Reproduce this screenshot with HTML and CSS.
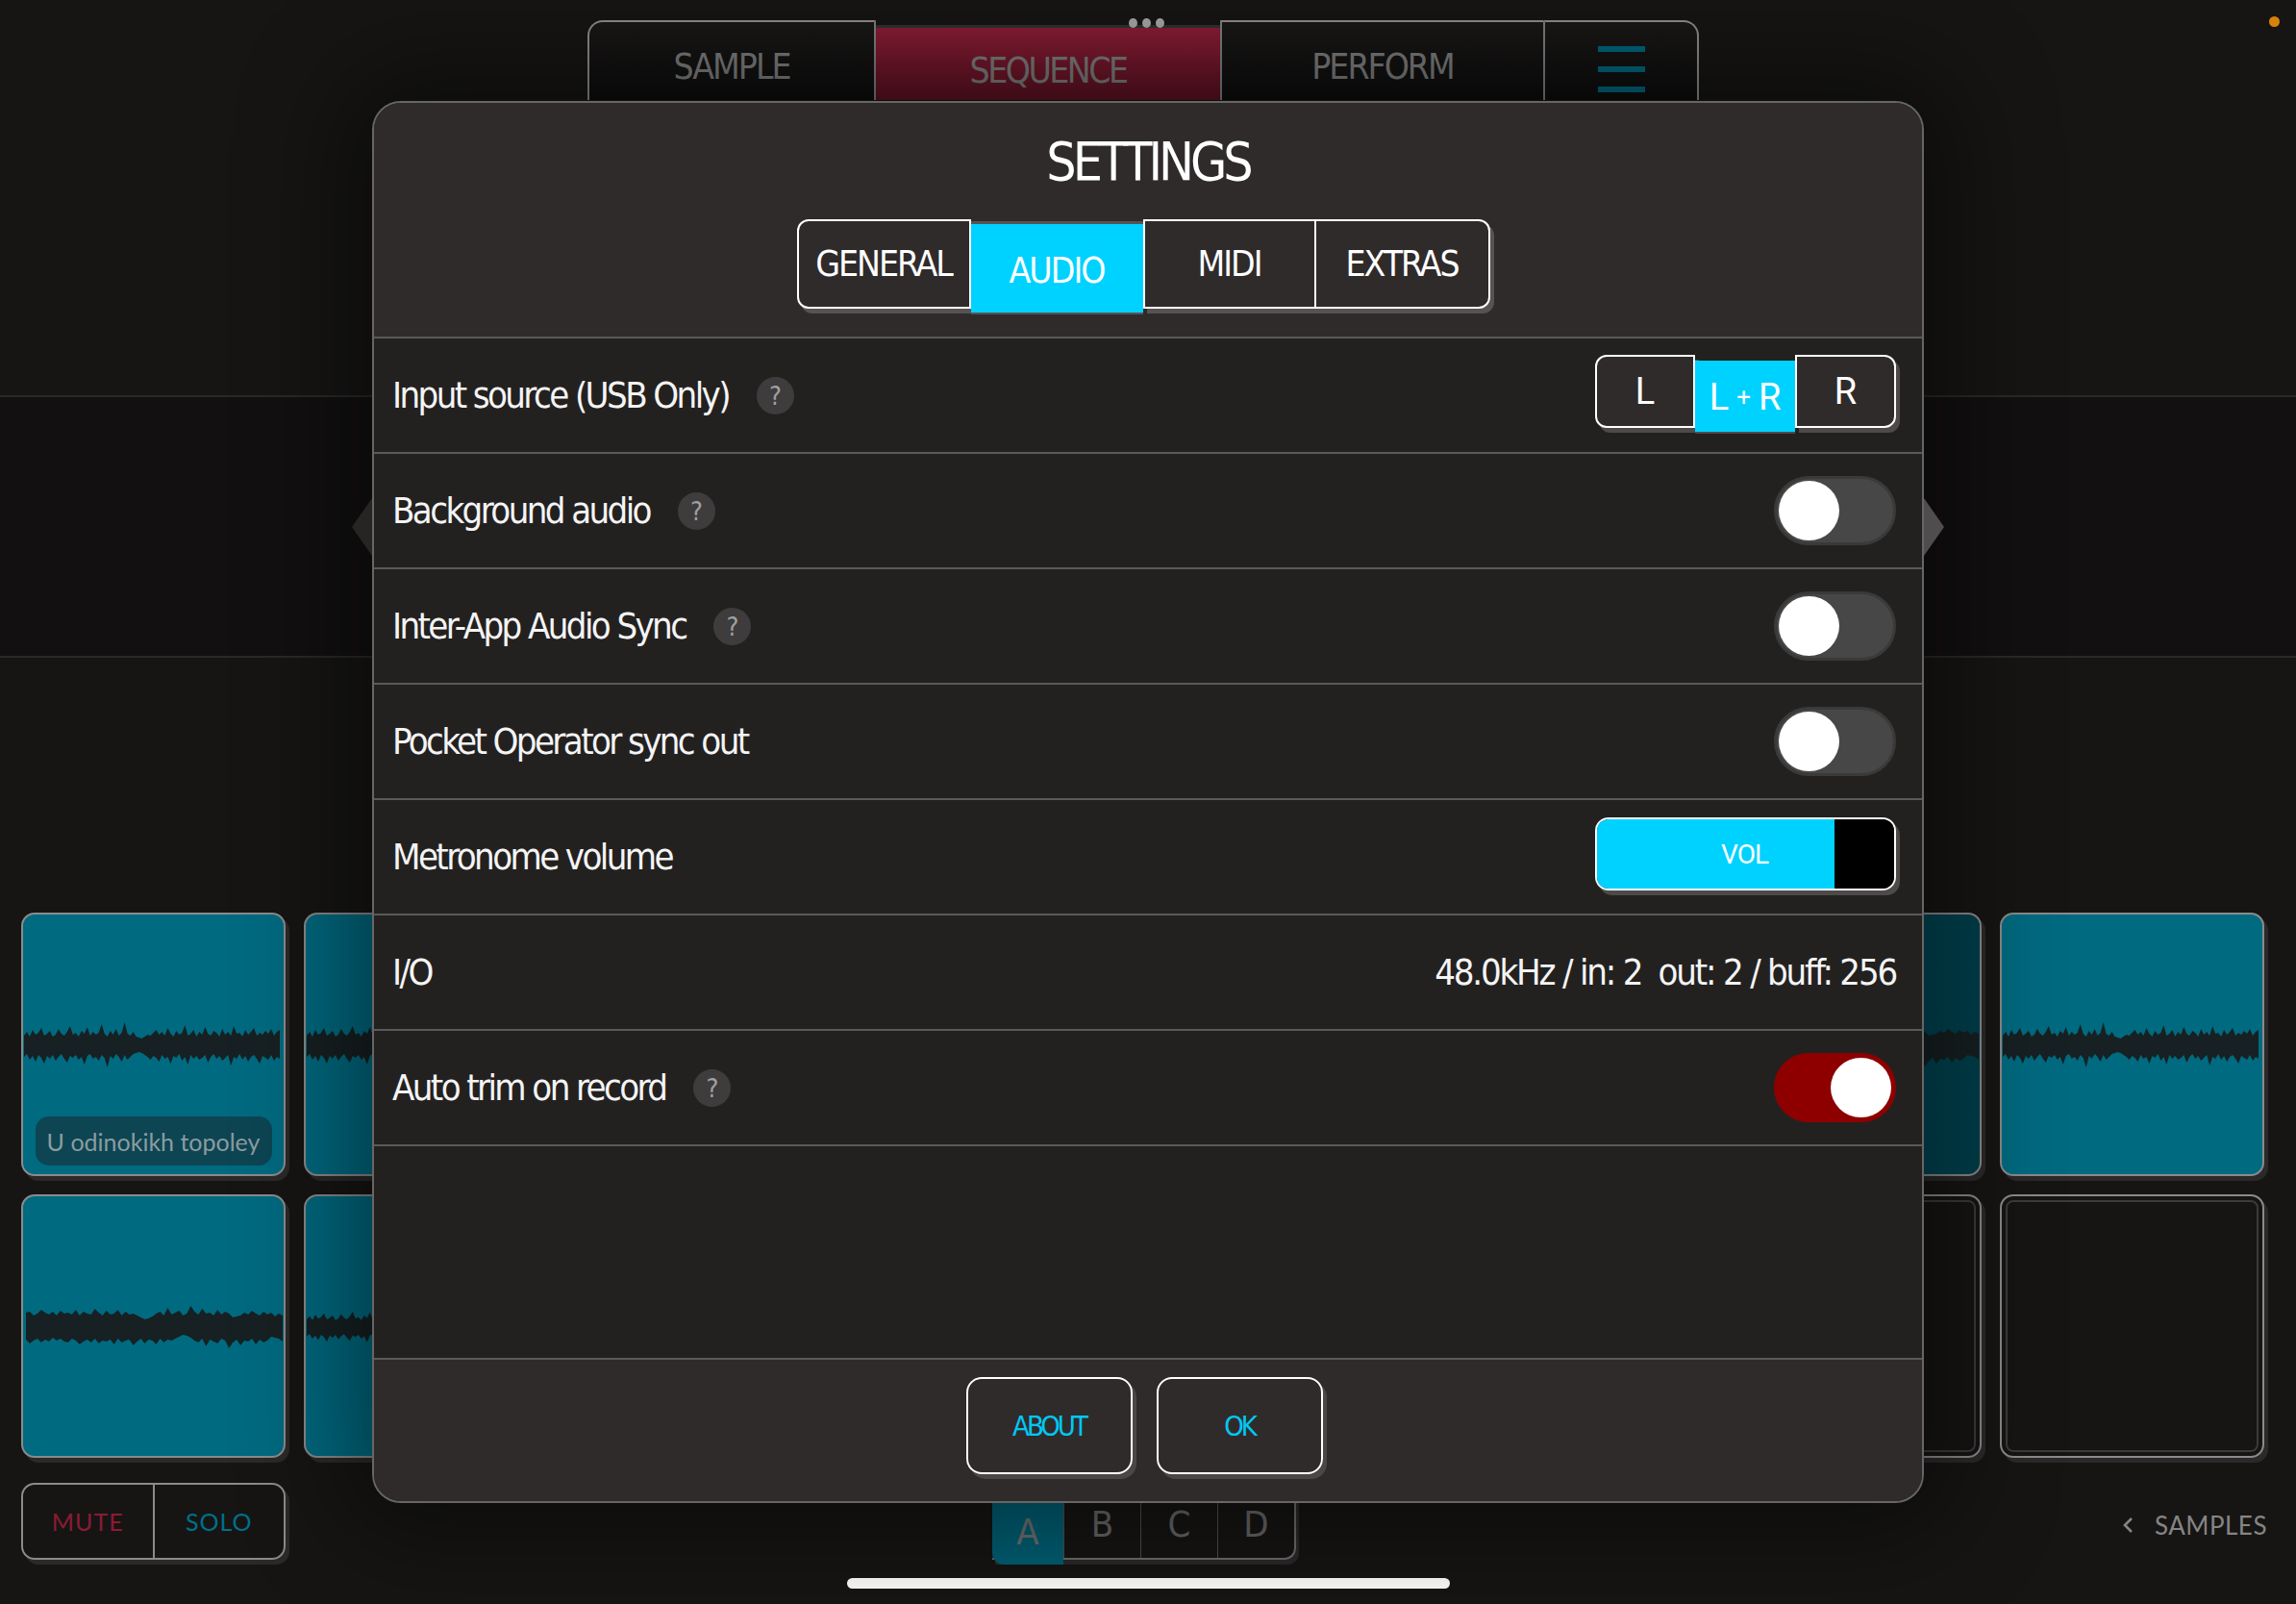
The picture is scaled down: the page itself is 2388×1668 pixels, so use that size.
FILE: index.html
```html
<!DOCTYPE html>
<html>
<head>
<meta charset="utf-8">
<link rel="stylesheet" href="styles.css">
</head>
<body>
<svg class="defs" width="0" height="0">
  <symbol id="wave1" viewBox="0 0 270 60">
    <path d="M0 18 4 16 8 19 12 15 16 17 20 14 24 18 28 16 32 13 36 17 40 15 44 18 48 19 52 20 56 16 60 14 64 17 68 12 72 18 76 15 80 16 84 11 88 17 92 14 96 8 100 16 104 18 108 13 112 15 116 17 120 10 124 18 128 14 132 16 136 19 140 21 144 22 148 20 152 18 156 16 160 17 164 14 168 18 172 12 176 16 180 17 184 13 188 18 192 15 196 11 200 17 204 16 208 14 212 18 216 12 220 17 224 15 228 16 232 13 236 18 240 14 244 17 248 15 252 12 256 16 260 18 264 14 268 15 268 43 264 47 260 44 256 42 252 46 248 43 244 45 240 41 236 44 232 42 228 45 224 46 220 42 216 44 212 48 208 45 204 43 200 46 196 42 192 47 188 44 184 45 180 43 176 48 172 42 168 46 164 44 160 43 156 49 152 45 148 42 144 47 140 43 136 44 132 48 128 42 124 46 120 43 116 44 112 42 108 40 104 38 100 39 96 41 92 44 88 46 84 42 80 50 76 43 72 45 68 47 64 42 60 44 56 52 52 46 48 43 44 49 40 44 36 45 32 42 28 48 24 43 20 46 16 44 12 40 8 41 4 42 0 45Z"/>
  </symbol>
  <symbol id="wave2" viewBox="0 0 270 60">
    <path d="M0 20 3 16 6 21 9 14 12 19 15 17 18 12 21 20 24 18 27 15 30 21 33 19 36 13 39 18 42 20 45 16 48 10 51 19 54 17 57 21 60 15 63 18 66 11 69 20 72 16 75 19 78 17 81 8 84 18 87 21 90 15 93 19 96 13 99 20 102 17 105 6 108 18 111 20 114 16 117 21 120 22 123 23 126 21 129 19 132 20 135 17 138 14 141 19 144 16 147 20 150 12 153 18 156 21 159 15 162 19 165 17 168 9 171 20 174 18 177 14 180 21 183 16 186 19 189 11 192 18 195 20 198 15 201 17 204 21 207 13 210 19 213 16 216 20 219 10 222 18 225 17 228 21 231 14 234 19 237 16 240 12 243 20 246 17 249 19 252 15 255 18 258 13 261 20 264 16 267 14 267 44 264 42 261 46 258 40 255 45 252 43 249 41 246 49 243 44 240 40 237 42 234 47 231 41 228 45 225 39 222 44 219 42 216 51 213 40 210 43 207 46 204 41 201 44 198 39 195 42 192 48 189 40 186 43 183 45 180 41 177 44 174 40 171 50 168 42 165 46 162 39 159 43 156 41 153 49 150 42 147 44 144 40 141 47 138 43 135 41 132 45 129 42 126 40 123 38 120 37 117 38 114 39 111 42 108 45 105 40 102 47 99 42 96 39 93 44 90 41 87 53 84 43 81 40 78 46 75 42 72 44 69 39 66 41 63 50 60 42 57 45 54 40 51 43 48 41 45 48 42 44 39 39 36 42 33 46 30 40 27 44 24 41 21 49 18 43 15 40 12 47 9 41 6 45 3 39 0 42Z"/>
  </symbol>
</svg>
<div class="app">
  <div class="top-tabs">
    <div class="ttab ttab-sample">SAMPLE</div>
    <div class="ttab ttab-seq">SEQUENCE</div>
    <div class="ttab ttab-perform">PERFORM</div>
    <div class="ttab ttab-menu"><div class="burger"><span></span><span></span><span></span></div></div>
  </div>
  <div class="band"></div>
  <div class="pads">
    <div class="pad">
      <svg class="wave"><use href="#wave2"/></svg>
      <div class="pad-label">U odinokikh topoley</div>
    </div>
    <div class="pad"><svg class="wave"><use href="#wave2"/></svg></div>
    <div class="pad"></div>
    <div class="pad"></div>
    <div class="pad"></div>
    <div class="pad"></div>
    <div class="pad pad-dim"><svg class="wave wave-flip"><use href="#wave1"/></svg></div>
    <div class="pad"><svg class="wave"><use href="#wave2"/></svg></div>
    <div class="pad"><svg class="wave wave-flip"><use href="#wave1"/></svg></div>
    <div class="pad"><svg class="wave wave-small"><use href="#wave2"/></svg></div>
    <div class="pad"></div>
    <div class="pad"></div>
    <div class="pad"></div>
    <div class="pad"></div>
    <div class="pad pad-empty"></div>
    <div class="pad pad-empty"></div>
  </div>
  <div class="bottom-row">
    <div class="mutesolo">
      <div class="ms ms-mute">MUTE</div>
      <div class="ms ms-solo">SOLO</div>
    </div>
    <div class="abcd">
      <div class="seg seg-a">A</div>
      <div class="seg">B</div>
      <div class="seg">C</div>
      <div class="seg seg-d">D</div>
    </div>
    <div class="samples">
      <svg class="chev" width="12" height="20" viewBox="0 0 12 20"><path d="M10 3 3 10 10 17" fill="none" stroke="#858585" stroke-width="2.6"/></svg>
      <span>SAMPLES</span>
    </div>
  </div>
  <div class="home-ind"></div>

  <div class="dots"><i></i><i></i><i></i></div>
  <div class="cam-dot"></div>

  <div class="modal">
    <div class="modal-head">
      <div class="title">SETTINGS</div>
      <div class="mtabs">
        <div class="mtab mtab-first">GENERAL</div>
        <div class="mtab mtab-on">AUDIO</div>
        <div class="mtab mtab-mid">MIDI</div>
        <div class="mtab mtab-last">EXTRAS</div>
      </div>
    </div>
    <div class="row">
      <div class="label">Input source (USB Only)</div>
      <div class="help">?</div>
      <div class="lr">
        <div class="lr-seg lr-l">L</div>
        <div class="lr-seg lr-on">L<span class="plus">+</span>R</div>
        <div class="lr-seg lr-r">R</div>
      </div>
    </div>
    <div class="row">
      <div class="label">Background audio</div>
      <div class="help">?</div>
      <div class="toggle"><div class="knob"></div></div>
    </div>
    <div class="row">
      <div class="label">Inter-App Audio Sync</div>
      <div class="help">?</div>
      <div class="toggle"><div class="knob"></div></div>
    </div>
    <div class="row">
      <div class="label">Pocket Operator sync out</div>
      <div class="toggle"><div class="knob"></div></div>
    </div>
    <div class="row">
      <div class="label">Metronome volume</div>
      <div class="vol">
        <div class="vol-fill">VOL</div>
        <div class="vol-rest"></div>
      </div>
    </div>
    <div class="row">
      <div class="label">I/O</div>
      <div class="value">48.0kHz / in: 2&nbsp; out: 2 / buff: 256</div>
    </div>
    <div class="row">
      <div class="label">Auto trim on record</div>
      <div class="help">?</div>
      <div class="toggle toggle-on"><div class="knob"></div></div>
    </div>
    <div class="spacer"></div>
    <div class="modal-foot">
      <div class="fbtn">ABOUT</div>
      <div class="fbtn">OK</div>
    </div>
  </div>
</div>
</body>
</html>
```

FILE: styles.css
```css
* { box-sizing: border-box; }
html, body { margin: 0; padding: 0; background: #161514; }
body { width: 2388px; height: 1668px; overflow: hidden; }
.defs { position: absolute; width: 0; height: 0; }

.app {
  position: relative;
  width: 2388px;
  height: 1668px;
  background: #161514;
  font-family: "DejaVu Sans Condensed", "DejaVu Sans", sans-serif;
  overflow: hidden;
}

/* ---------- top tabs ---------- */
.top-tabs {
  display: flex;
  margin-left: 611px;
  padding-top: 21px;
  height: 104px;
}
.ttab {
  height: 83px;
  display: flex;
  justify-content: center;
  padding-top: 28px;
  font-size: 37px;
  line-height: 37px;
  color: #7a7a7a;
  background: linear-gradient(#191817, #0e0d0d);
  border-top: 2px solid #8a8a8a;
  letter-spacing: -2px;
}
.ttab-sample { width: 300px; border-left: 2px solid #8a8a8a; border-right: 2px solid #7c7c7c; border-top-left-radius: 16px; }
.ttab-seq {
  width: 358px;
  height: 78px;
  margin-top: 5px;
  padding-top: 26px;
  border-top: 3px solid #323030;
  background: linear-gradient(#881c34, #5a1121);
  letter-spacing: -2.5px;
}
.ttab-perform { width: 336px; border-left: 2px solid #7c7c7c; }
.ttab-menu { width: 162px; border-left: 2px solid #7c7c7c; border-right: 2px solid #8a8a8a; border-top-right-radius: 16px; padding-top: 25px; }
.burger { display: flex; flex-direction: column; gap: 15px; }
.burger span { display: block; width: 49px; height: 6px; background: #00647a; }

.dots { position: absolute; left: 1174px; top: 19px; display: flex; gap: 5px; }
.dots i { display: block; width: 9px; height: 10px; border-radius: 50%; background: #a3a3a3; }
.cam-dot { position: absolute; left: 2360px; top: 17px; width: 11px; height: 11px; border-radius: 50%; background: #d9820b; }

/* ---------- background band ---------- */
.band {
  margin-top: 307px;
  height: 273px;
  border-top: 2px solid #2a2828;
  border-bottom: 2px solid #2a2828;
  background: #121011;
}

/* ---------- pads ---------- */
.pads {
  margin-top: 265px;
  margin-left: 22px;
  display: grid;
  grid-template-columns: repeat(8, 275px);
  grid-template-rows: repeat(2, 274px);
  column-gap: 19px;
  row-gap: 19px;
}
.pad {
  border: 2px solid #8b8b8b;
  border-radius: 14px;
  background: #006a80;
  box-shadow: 4px 5px 0 #2b2929;
  display: flex;
  flex-direction: column;
  align-items: center;
}
.pad-dim { background: linear-gradient(90deg, #006476, #003f4b); }
.pad-empty {
  background: #161514;
  box-shadow: 4px 5px 0 #2b2929, inset 0 0 0 4px #161514, inset 0 0 0 6px #3c3a3a;
}
.wave { width: 269px; height: 60px; margin-top: 106px; fill: #172022; flex: none; }
.wave-flip { transform: scaleX(-1); }
.wave-small { transform: scaleY(0.8); }
.pad-label {
  margin-top: 44px;
  width: 246px;
  height: 51px;
  border-radius: 14px;
  background: #0d4553;
  color: #8c9ca0;
  font-family: Lato, "Open Sans", sans-serif;
  font-size: 25px;
  display: flex;
  align-items: center;
  justify-content: center;
}

/* ---------- bottom row ---------- */
.bottom-row {
  margin-top: 26px;
  height: 80px;
  display: grid;
  grid-template-columns: 1fr auto 1fr;
  padding: 0 30px 0 22px;
}
.mutesolo {
  justify-self: start;
  width: 275px;
  height: 80px;
  border: 2px solid #8b8b8b;
  border-radius: 14px;
  box-shadow: 4px 5px 0 #2b2929;
  display: flex;
  font-family: Lato, "Open Sans", sans-serif;
  font-size: 25px;
  letter-spacing: 1px;
}
.ms { flex: 1; display: flex; align-items: center; justify-content: center; }
.ms-mute { color: #8b1b34; border-right: 2px solid #8b8b8b; }
.ms-solo { color: #00708a; }

.abcd {
  justify-self: center;
  display: flex;
  height: 80px;
  width: 316px;
  border-right: 2px solid #6e6e6e;
  border-bottom: 2px solid #6e6e6e;
  border-bottom-right-radius: 12px;
  box-shadow: 3px 5px 0 #2b2929;
  font-size: 38px;
  color: #666;
}
.seg { width: 80px; display: flex; align-items: center; justify-content: center; border-left: 1px solid #4e4e4e; padding-top: 8px; }
.seg-a { width: 74px; border-left: 0; background: #005f74; color: #707070; margin-bottom: -7px; padding-top: 16px; border-bottom-left-radius: 12px; }
.seg-d { width: 80px; }

.samples {
  justify-self: end;
  display: flex;
  align-items: center;
  gap: 22px;
  padding-top: 8px;
  font-family: Lato, "Open Sans", sans-serif;
  font-size: 26px;
  color: #858585;
  letter-spacing: 0.5px;
}

.home-ind { margin: 19px auto 0; width: 627px; height: 11px; border-radius: 6px; background: #fff; }

/* ---------- modal ---------- */
.modal {
  position: absolute;
  left: 387px;
  top: 105px;
  width: 1614px;
  height: 1458px;
  border: 2px solid #676565;
  border-radius: 30px;
  background: #232120;
  box-shadow: 0 0 110px 30px rgba(0,0,0,0.45);
  display: flex;
  flex-direction: column;
}
.modal::before {
  content: "";
  position: absolute;
  left: -23px;
  top: 411px;
  border-style: solid;
  border-width: 30px 21px 30px 0;
  border-color: transparent #272424 transparent transparent;
}
.modal::after {
  content: "";
  position: absolute;
  right: -23px;
  top: 411px;
  border-style: solid;
  border-width: 30px 0 30px 21px;
  border-color: transparent transparent transparent #4f4d4d;
}
.modal-head {
  height: 245px;
  flex: none;
  background: #302b2b;
  border-bottom: 2px solid #5b5959;
  border-radius: 28px 28px 0 0;
  display: flex;
  flex-direction: column;
  align-items: center;
}
.title {
  margin-top: 31px;
  height: 60px;
  line-height: 60px;
  font-size: 55px;
  color: #fff;
  letter-spacing: -4px;
}
.mtabs { margin-top: 30px; margin-right: 10px; display: flex; height: 93px; }
.mtab {
  width: 180px;
  height: 93px;
  display: flex;
  align-items: center;
  justify-content: center;
  font-size: 37px;
  color: #fff;
  background: #302b2b;
  border-top: 2px solid #fff;
  border-bottom: 2px solid #fff;
  box-shadow: 4px 5px 0 #575353;
  letter-spacing: -2px;
}
.mtab-first { width: 181px; border-left: 2px solid #fff; border-right: 2px solid #fff; border-radius: 12px 0 0 12px; }
.mtab-on { width: 179px; margin-top: 5px; height: 92px; border: 0; background: #00d2ff; padding-top: 4px; box-shadow: 0 2px 0 #575353, 0 -3px 0 #575353; }
.mtab-mid { border-left: 2px solid #fff; border-right: 2px solid #fff; }
.mtab-last { width: 181px; border-right: 2px solid #fff; border-radius: 0 12px 12px 0; }

.row {
  height: 120px;
  flex: none;
  border-bottom: 2px solid #5b5959;
  display: flex;
  align-items: center;
  padding: 0 27px 0 19px;
}
.label, .value {
  font-family: "DejaVu Sans Condensed", "DejaVu Sans", sans-serif;
  font-size: 38px;
  color: #f4f4f4;
  white-space: nowrap;
  letter-spacing: -2.6px;
  margin-bottom: 1px;
}
.value { margin-left: auto; letter-spacing: -2.2px; }
.help {
  width: 39px;
  height: 39px;
  margin-left: 29px;
  border-radius: 50%;
  background: #3e3c3c;
  color: #a0a0a0;
  font-size: 27px;
  display: flex;
  align-items: center;
  justify-content: center;
}
.lr {
  margin-left: auto;
  margin-bottom: 8px;
  display: flex;
  height: 76px;
  font-family: Roboto, "Liberation Sans", sans-serif;
  font-size: 38px;
  color: #fff;
}
.lr-seg {
  width: 104px;
  display: flex;
  align-items: center;
  justify-content: center;
  border: 2px solid #fff;
  background: #302b2b;
  box-shadow: 4px 5px 0 #4e4a4a;
}
.lr-l { border-radius: 12px 0 0 12px; }
.lr-r { border-radius: 0 12px 12px 0; width: 105px; }
.lr-on { border: 0; background: #00d2ff; margin-top: 6px; margin-bottom: -4px; box-shadow: 0 2px 0 #4e4a4a; padding-top: 2px; }
.plus { font-size: 26px; margin: 0 8px; }

.toggle {
  margin-left: auto;
  width: 127px;
  height: 72px;
  border-radius: 36px;
  background: #474747;
  border: 3px solid #3a3a3a;
  padding: 2px;
  display: flex;
  align-items: center;
}
.knob { width: 63px; height: 62px; border-radius: 50%; background: #fff; }
.toggle-on { background: #8e0000; border-color: #8e0000; justify-content: flex-end; }

.vol {
  margin-left: auto;
  margin-bottom: 6px;
  width: 313px;
  height: 76px;
  border: 2px solid #fff;
  border-radius: 14px;
  overflow: hidden;
  display: flex;
  box-shadow: 4px 5px 0 #4e4a4a;
  font-family: Roboto, "Liberation Sans", sans-serif;
  font-size: 28px;
  color: #fff;
  letter-spacing: -1px;
}
.vol-fill { width: 247px; background: #00d2ff; display: flex; align-items: center; justify-content: center; padding-left: 60px; }
.vol-rest { flex: 1; background: #000; }

.spacer { flex: 1; }
.modal-foot {
  height: 149px;
  flex: none;
  border-top: 2px solid #5b5959;
  background: #302b2b;
  border-radius: 0 0 28px 28px;
  display: flex;
  justify-content: center;
  gap: 25px;
  padding-top: 18px;
  padding-right: 8px;
}
.fbtn {
  width: 173px;
  height: 101px;
  border: 2px solid #fff;
  border-radius: 16px;
  box-shadow: 4px 5px 0 #4b4747;
  display: flex;
  align-items: center;
  justify-content: center;
  font-size: 29px;
  color: #00c8f2;
  letter-spacing: -3px;
}
```
